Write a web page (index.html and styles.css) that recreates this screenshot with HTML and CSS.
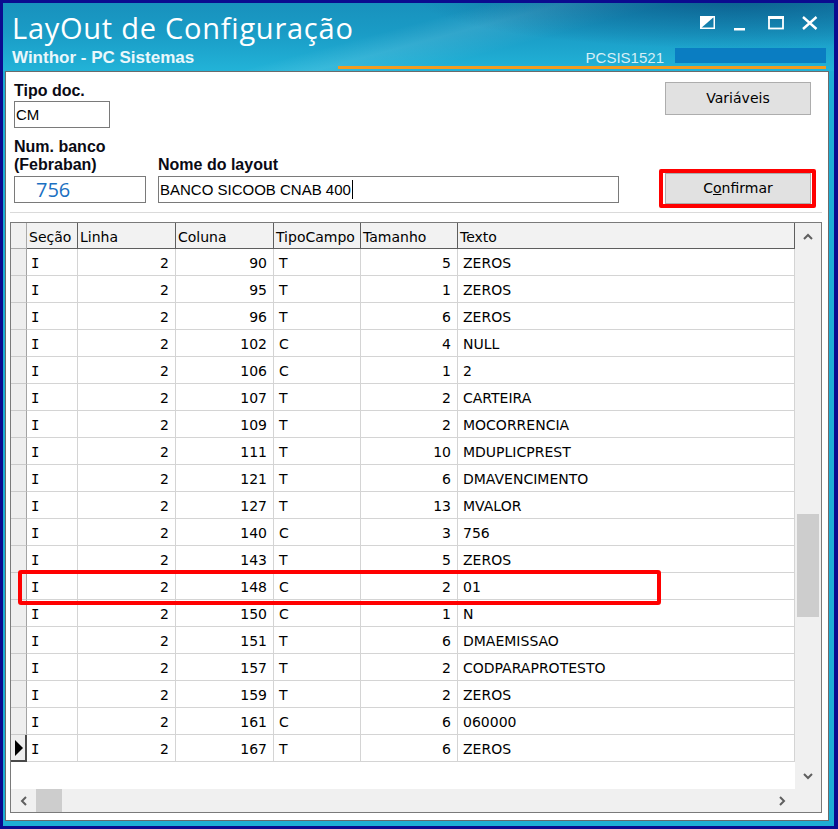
FILE: index.html
```html
<!DOCTYPE html>
<html lang="pt">
<head>
<meta charset="utf-8">
<title>LayOut de Configuração</title>
<link rel="stylesheet" href="styles.css">
</head>
<body>
<div class="frame">
  <div class="titlebar">
    <div class="title">LayOut de Configuração</div>
    <svg class="controls" width="120" height="18" viewBox="0 0 120 18">
      <rect x="1.75" y="3.75" width="13.5" height="11.5" fill="none" stroke="#fff" stroke-width="1.5"/>
      <polygon points="1,3 16,3 1,16" fill="#fff"/>
      <rect x="35" y="15" width="11" height="2.5" fill="#fff"/>
      <rect x="70" y="4.5" width="14" height="11" fill="none" stroke="#fff" stroke-width="1.8"/>
      <rect x="69" y="3" width="16" height="3" fill="#fff"/>
      <path d="M104 4 L117.5 16 M117.5 4 L104 16" stroke="#fff" stroke-width="2.4" fill="none"/>
    </svg>
    <div class="subtitle">Winthor - PC Sistemas</div>
    <div class="meta"><span class="code">PCSIS1521</span><span class="bar"></span></div>
    <div class="orange"></div>
  </div>

  <div class="panel">
    <div class="form">
      <div class="fields">
        <div class="label">Tipo doc.</div>
        <div class="input tipo">CM</div>
        <div class="fieldrow">
          <div class="group num">
            <div class="label">Num. banco<br>(Febraban)</div>
            <div class="input numbanco">756</div>
          </div>
          <div class="group nome">
            <div class="label">Nome do layout</div>
            <div class="input nomeinput">BANCO SICOOB CNAB 400<span class="caret"></span></div>
          </div>
        </div>
      </div>
      <div class="actions">
        <div class="btn vars">Variáveis</div>
        <div class="mark"><div class="btn confirm">C<span class="acc">o</span>nfirmar</div></div>
      </div>
    </div>

    <div class="grid">
      <div class="main">
        <div class="hdr">
          <div class="hind"></div>
          <div class="hc">Seção</div>
          <div class="hc">Linha</div>
          <div class="hc">Coluna</div>
          <div class="hc">TipoCampo</div>
          <div class="hc">Tamanho</div>
          <div class="hc">Texto</div>
        </div>
        <div class="row"><div class="ind"></div><div class="c s">I</div><div class="c r">2</div><div class="c r">90</div><div class="c">T</div><div class="c r">5</div><div class="c">ZEROS</div></div>
        <div class="row"><div class="ind"></div><div class="c s">I</div><div class="c r">2</div><div class="c r">95</div><div class="c">T</div><div class="c r">1</div><div class="c">ZEROS</div></div>
        <div class="row"><div class="ind"></div><div class="c s">I</div><div class="c r">2</div><div class="c r">96</div><div class="c">T</div><div class="c r">6</div><div class="c">ZEROS</div></div>
        <div class="row"><div class="ind"></div><div class="c s">I</div><div class="c r">2</div><div class="c r">102</div><div class="c">C</div><div class="c r">4</div><div class="c">NULL</div></div>
        <div class="row"><div class="ind"></div><div class="c s">I</div><div class="c r">2</div><div class="c r">106</div><div class="c">C</div><div class="c r">1</div><div class="c">2</div></div>
        <div class="row"><div class="ind"></div><div class="c s">I</div><div class="c r">2</div><div class="c r">107</div><div class="c">T</div><div class="c r">2</div><div class="c">CARTEIRA</div></div>
        <div class="row"><div class="ind"></div><div class="c s">I</div><div class="c r">2</div><div class="c r">109</div><div class="c">T</div><div class="c r">2</div><div class="c">MOCORRENCIA</div></div>
        <div class="row"><div class="ind"></div><div class="c s">I</div><div class="c r">2</div><div class="c r">111</div><div class="c">T</div><div class="c r">10</div><div class="c">MDUPLICPREST</div></div>
        <div class="row"><div class="ind"></div><div class="c s">I</div><div class="c r">2</div><div class="c r">121</div><div class="c">T</div><div class="c r">6</div><div class="c">DMAVENCIMENTO</div></div>
        <div class="row"><div class="ind"></div><div class="c s">I</div><div class="c r">2</div><div class="c r">127</div><div class="c">T</div><div class="c r">13</div><div class="c">MVALOR</div></div>
        <div class="row"><div class="ind"></div><div class="c s">I</div><div class="c r">2</div><div class="c r">140</div><div class="c">C</div><div class="c r">3</div><div class="c">756</div></div>
        <div class="row"><div class="ind"></div><div class="c s">I</div><div class="c r">2</div><div class="c r">143</div><div class="c">T</div><div class="c r">5</div><div class="c">ZEROS</div></div>
        <div class="row"><div class="ind"></div><div class="c s">I</div><div class="c r">2</div><div class="c r">148</div><div class="c">C</div><div class="c r">2</div><div class="c">01</div></div>
        <div class="row"><div class="ind"></div><div class="c s">I</div><div class="c r">2</div><div class="c r">150</div><div class="c">C</div><div class="c r">1</div><div class="c">N</div></div>
        <div class="row"><div class="ind"></div><div class="c s">I</div><div class="c r">2</div><div class="c r">151</div><div class="c">T</div><div class="c r">6</div><div class="c">DMAEMISSAO</div></div>
        <div class="row"><div class="ind"></div><div class="c s">I</div><div class="c r">2</div><div class="c r">157</div><div class="c">T</div><div class="c r">2</div><div class="c">CODPARAPROTESTO</div></div>
        <div class="row"><div class="ind"></div><div class="c s">I</div><div class="c r">2</div><div class="c r">159</div><div class="c">T</div><div class="c r">2</div><div class="c">ZEROS</div></div>
        <div class="row"><div class="ind"></div><div class="c s">I</div><div class="c r">2</div><div class="c r">161</div><div class="c">C</div><div class="c r">6</div><div class="c">060000</div></div>
        <div class="row"><div class="ind cur"><svg width="10" height="16" viewBox="0 0 10 16"><polygon points="1,0 9,8 1,16" fill="#000"/></svg></div><div class="c s">I</div><div class="c r">2</div><div class="c r">167</div><div class="c">T</div><div class="c r">6</div><div class="c">ZEROS</div></div>
      </div>
      <div class="vs">
        <div class="sbtn"><svg width="10" height="7" viewBox="0 0 10 7"><path d="M1 6 L5 2 L9 6" stroke="#5f5f5f" stroke-width="2" fill="none"/></svg></div>
        <div class="track"><div class="thumb"></div></div>
        <div class="sbtn"><svg width="10" height="7" viewBox="0 0 10 7"><path d="M1 1 L5 5 L9 1" stroke="#5f5f5f" stroke-width="2" fill="none"/></svg></div>
      </div>
      <div class="hs">
        <div class="hbtn"><svg width="7" height="10" viewBox="0 0 7 10"><path d="M6 1 L2 5 L6 9" stroke="#5f5f5f" stroke-width="2" fill="none"/></svg></div>
        <div class="hthumb"></div>
        <div class="hspace"></div>
        <div class="hbtn"><svg width="7" height="10" viewBox="0 0 7 10"><path d="M1 1 L5 5 L1 9" stroke="#5f5f5f" stroke-width="2" fill="none"/></svg></div>
      </div>
      <div class="corner"></div>
    </div>
  </div>
</div>
<div class="rowmark"></div>
</body>
</html>
```

FILE: styles.css
```css
* { box-sizing: border-box; }
html, body { margin: 0; }
body {
  width: 838px;
  height: 829px;
  overflow: hidden;
  position: relative;
  background: #0b0b8f;
  padding: 3px 4px 3px 3px;
  font-family: "DejaVu Sans", sans-serif;
  font-size: 14px;
  color: #000;
}
.frame {
  height: 823px;
  background: #1eaed4;
  display: flex;
  flex-direction: column;
}
.titlebar {
  height: 68px;
  flex: none;
  padding: 9px 8px 0 9px;
  display: grid;
  grid-template-columns: 1fr auto;
  grid-template-rows: 37px 17px 3px;
  background:
    radial-gradient(ellipse 55% 110% at 88% -10%, rgba(0, 50, 100, 0.55), rgba(0, 50, 100, 0) 70%),
    linear-gradient(165deg, rgba(255,255,255,0) 45%, rgba(255,255,255,0.10) 52%, rgba(255,255,255,0) 62%),
    linear-gradient(180deg, #1891bd 0%, #1a9cc6 45%, #22b3d8 100%);
}
.title {
  font-family: "Open Sans", sans-serif;
  font-size: 29px;
  letter-spacing: 0.75px;
  line-height: 30px;
  color: #fff;
  white-space: nowrap;
  margin-top: 1px;
}
.controls {
  justify-self: end;
  margin-top: 1px;
  margin-right: 7px;
}
.subtitle {
  font-family: "Liberation Sans", sans-serif;
  font-weight: bold;
  font-size: 17px;
  line-height: 17px;
  color: #eaf7fb;
  white-space: nowrap;
}
.meta {
  display: flex;
  align-items: flex-start;
  gap: 11px;
}
.code {
  font-family: "Liberation Sans", sans-serif;
  font-size: 15px;
  line-height: 17px;
  color: #d6eef6;
}
.bar {
  width: 151px;
  height: 15px;
  margin-top: -1px;
  background: #0a7dc2;
}
.orange {
  grid-column: 1 / -1;
  margin-left: 326px;
  height: 3px;
  background: #f29b1f;
}
.panel {
  flex: none;
  height: 750px;
  margin: 0 5px 5px 2px;
  border: 1px solid #6b6b6b;
  background: #fff;
}
.form {
  height: 141px;
  margin: 0 6px 0 4px;
  padding: 10px 6px 9px 4px;
  border-bottom: 1px solid #dadada;
  display: flex;
  align-items: flex-start;
}
.label {
  font-family: "Liberation Sans", sans-serif;
  font-weight: bold;
  font-size: 16px;
  line-height: 18px;
  color: #0a0a14;
  white-space: nowrap;
}
.input {
  height: 27px;
  border: 1px solid #7a7a7a;
  background: #fff;
  font-family: "Liberation Sans", sans-serif;
  font-size: 15px;
  line-height: 25px;
  padding-left: 1px;
  white-space: nowrap;
}
.tipo { width: 96px; margin-top: 1px; }
.fieldrow {
  display: flex;
  align-items: flex-end;
  gap: 12px;
  margin-top: 10px;
}
.group .input { margin-top: 2px; }
.num { width: 132px; }
.numbanco {
  font-family: "Open Sans", sans-serif;
  font-size: 20px;
  color: #1b70c2;
  padding-left: 21px;
}
.nomeinput { width: 461px; }
.caret {
  display: inline-block;
  width: 1px;
  height: 19px;
  background: #000;
  vertical-align: -4px;
  margin-left: 1px;
}
.actions {
  margin-left: auto;
  width: 157px;
  display: flex;
  flex-direction: column;
}
.btn {
  width: 146px;
  background: #e1e1e1;
  border: 1px solid #adadad;
  text-align: center;
  font-size: 14px;
}
.vars {
  height: 33px;
  line-height: 31px;
  margin-left: 6px;
}
.mark {
  margin-top: 54px;
  border: 4px solid #ff0000;
  border-radius: 2px;
  padding: 0 1px 0 2px;
}
.confirm {
  height: 31px;
  line-height: 29px;
}
.acc { text-decoration: underline; }

.grid {
  margin: 9px 6px 0 4px;
  height: 591px;
  border: 1px solid #7a7a7a;
  display: grid;
  grid-template-columns: 784px 26px;
  grid-template-rows: 566px 23px;
}
.main {
  background: #fff;
  overflow: hidden;
}
.hdr, .row {
  display: grid;
  grid-template-columns: 16px 51px 98px 98px 87px 97px 337px;
}
.hdr { height: 26px; }
.row { height: 27px; }
.hind {
  background: #f0f0f0;
  border-right: 1px solid #a9a9a9;
  border-bottom: 1px solid #a9a9a9;
}
.hc {
  background: #f2f2f2;
  border-right: 1px solid #5e5e5e;
  border-bottom: 1px solid #5e5e5e;
  padding: 4px 0 0 2px;
  line-height: 20px;
  white-space: nowrap;
  overflow: hidden;
}
.ind {
  background: #eeeeee;
  border-right: 1px solid #a3a3a3;
  border-bottom: 1px solid #cacaca;
}
.ind.cur {
  border-right: 2px solid #4a4a4a;
  border-bottom: 2px solid #4a4a4a;
  display: flex;
  align-items: center;
  padding-left: 3px;
}
.c {
  border-right: 1px solid #d4d4d4;
  border-bottom: 1px solid #d4d4d4;
  line-height: 23px;
  padding: 3px 5px 0 5px;
  white-space: nowrap;
  overflow: hidden;
}
.c.r { text-align: right; padding-right: 6px; }
.c.s { font-family: "DejaVu Sans Mono", monospace; padding-left: 4px; }

.vs {
  background: #f0f0f0;
  display: flex;
  flex-direction: column;
}
.sbtn {
  height: 26px;
  flex: none;
  display: flex;
  align-items: center;
  justify-content: center;
}
.track {
  flex: 1;
  padding: 265px 2px 0 2px;
}
.thumb {
  height: 103px;
  background: #cdcdcd;
}
.hs {
  background: #f0f0f0;
  display: flex;
}
.hbtn {
  width: 25px;
  flex: none;
  display: flex;
  align-items: center;
  justify-content: center;
}
.hthumb {
  width: 26px;
  flex: none;
  background: #cdcdcd;
}
.hspace { flex: 1; }
.corner { background: #f0f0f0; }

.rowmark {
  position: absolute;
  left: 18px;
  top: 570px;
  width: 643px;
  height: 35px;
  border: 4px solid #ff0000;
  border-radius: 3px;
}
```
